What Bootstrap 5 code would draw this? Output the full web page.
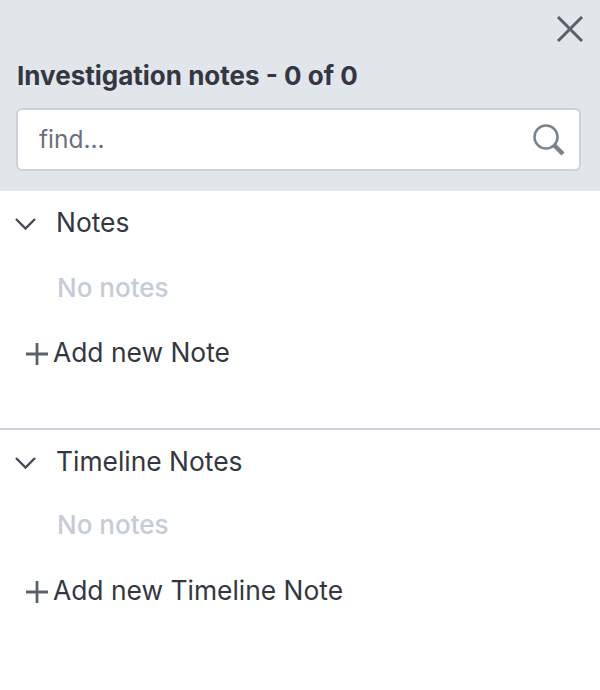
<!doctype html>
<html><head><meta charset="utf-8">
<link href="https://cdn.jsdelivr.net/npm/bootstrap@5.3.0/dist/css/bootstrap.min.css" rel="stylesheet">
<style>
html,body{background:#fff;}
body{font-family:Inter,"Open Sans",sans-serif;color:#343741;font-size:26.400px;}
.hdr{background:#e1e6eb;height:191px;padding:16px 19px 20px 16px;}
.closer{margin-right:-3px;}
.ttl{font-size:26px;font-weight:700;line-height:30px;color:#343741;margin:19px 0 17px 1px;white-space:nowrap;}
.findbox{height:63px;background:#fff;border:2px solid #ccd2db;border-radius:6px;padding:0 13px 0 21px;}
.findtxt{color:#69707d;font-size:24.500px;}
.sect{height:238px;}
.sect+.sect{border-top:2px solid #cdd3dc;margin-top:-1px;}
.shead{height:64px;padding-left:15px;}
.shead svg{margin-top:1px;}
.shead span{margin-left:20px;}
.none{color:#c5ccd6;padding-left:57px;line-height:30px;margin-top:18px;font-weight:500;font-size:26px;}
.sect+.sect .none{margin-top:16px;}
.addr{padding-left:25px;margin-top:34px;line-height:30px;}
.sect+.sect .addr{margin-top:35px;}
.addr svg{margin-top:4px;}
</style></head><body>
<div class="hdr d-flex flex-column">
 <div class="closer d-flex justify-content-end"><svg width="28" height="26" viewBox="0 0 28 26"><path d="M2 1L26 25M26 1L2 25" stroke="#5a616c" stroke-width="3" fill="none"/></svg></div>
 <div class="ttl">Investigation notes - 0 of 0</div>
 <div class="findbox d-flex align-items-center justify-content-between"><span class="findtxt">find...</span>
 <svg width="34" height="34" viewBox="0 0 34 34"><circle cx="14" cy="14" r="11.500" stroke="#7a828e" stroke-width="2.500" fill="none"/><path d="M22 22L31 31" stroke="#7a828e" stroke-width="4.500"/></svg></div>
</div>
<div class="sect"><div class="shead d-flex align-items-center"><svg width="21" height="12" viewBox="0 0 21 12"><path d="M1 1L10.500 10.500L20 1" stroke="#444b56" stroke-width="2.400" fill="none"/></svg><span>Notes</span></div>
<div class="none">No notes</div>
<div class="addr d-flex align-items-center"><svg width="24" height="24" viewBox="0 0 24 24"><path d="M12 1V23M1 12H23" stroke="#5a616c" stroke-width="2.800"/></svg><span class="ms-1">Add new Note</span></div></div>
<div class="sect"><div class="shead d-flex align-items-center"><svg width="21" height="12" viewBox="0 0 21 12"><path d="M1 1L10.500 10.500L20 1" stroke="#444b56" stroke-width="2.400" fill="none"/></svg><span>Timeline Notes</span></div>
<div class="none">No notes</div>
<div class="addr d-flex align-items-center"><svg width="24" height="24" viewBox="0 0 24 24"><path d="M12 1V23M1 12H23" stroke="#5a616c" stroke-width="2.800"/></svg><span class="ms-1">Add new Timeline Note</span></div></div>
</body></html>
